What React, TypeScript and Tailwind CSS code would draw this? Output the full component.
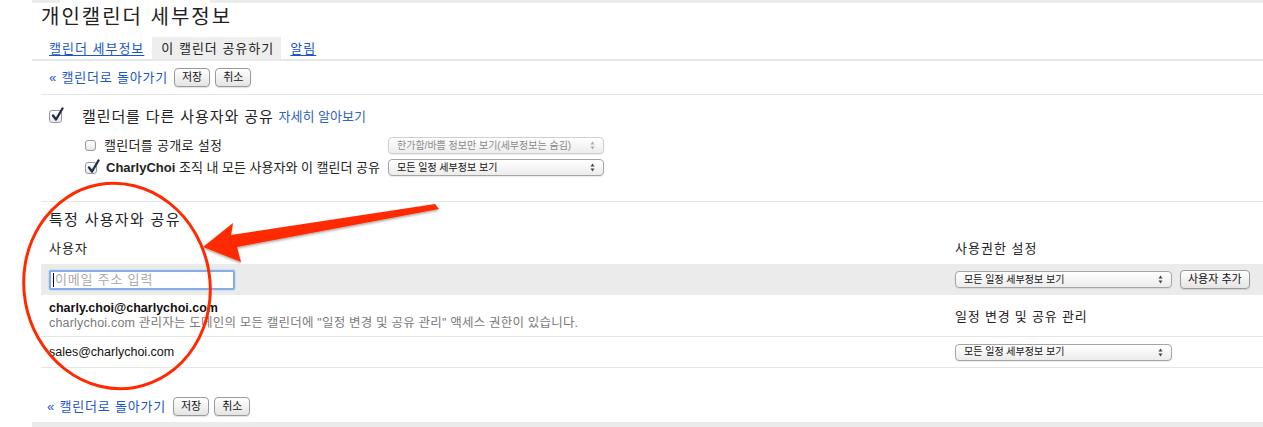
import React from "react";

const Arrows = ({ c = "#555" }: { c?: string }) => (
  <svg width="5" height="9" viewBox="0 0 5 9">
    <path d="M2.5 0.5 L4.5 3.5 L0.5 3.5 Z" fill={c} />
    <path d="M2.5 8.5 L4.5 5.5 L0.5 5.5 Z" fill={c} />
  </svg>
);

const Select = ({ className, text, disabled }: { className: string; text: string; disabled?: boolean }) => (
  <div
    className={
      "flex h-[17px] items-center justify-between rounded-[4px] border bg-gradient-to-b from-white to-[#ececec] pl-[8px] pr-[8px] text-[10px] leading-none shadow-[0_1px_1px_rgba(0,0,0,0.08)] " +
      (disabled ? "border-[#cfcfcf] text-[#8a8a8a]" : "border-[#a5a5a5] text-[#111]") +
      " " +
      className
    }
  >
    <span>{text}</span>
    <Arrows c={disabled ? "#aaa" : "#444"} />
  </div>
);

const Btn = ({ text }: { text: string }) => (
  <div className="flex h-[19px] items-center rounded-[4px] border border-[#9a9a9a] bg-gradient-to-b from-white to-[#e4e4e4] px-[7px] text-[11px] leading-none text-[#111] shadow-[0_1px_1px_rgba(0,0,0,0.12)]">
    {text}
  </div>
);

const Check = ({ checked, size }: { checked: boolean; size: string }) => (
  <div
    className={
      "relative flex items-center justify-center rounded-[3px] border border-[#9a9a9a] bg-gradient-to-b from-white to-[#e8e8e8] " +
      size
    }
  >
    {checked && (
      <svg className="absolute left-[1px] top-[-4px]" width="13" height="15" viewBox="0 0 13 15">
        <path d="M2 8.5 L5 12.5 L11.5 1.5" fill="none" stroke="#1f2d4a" strokeWidth="2.3" strokeLinecap="round" strokeLinejoin="round" />
      </svg>
    )}
  </div>
);

const BackRow = ({ gap }: { gap: string }) => (
  <div className={"flex items-center " + gap}>
    <a className="text-[13px] leading-none tracking-[0.8px] text-[#1a56c8]">« 캘린더로 돌아가기</a>
    <div className="flex gap-[5px]">
      <Btn text="저장" />
      <Btn text="취소" />
    </div>
  </div>
);

export default function App() {
  return (
    <div className="relative h-[427px] w-[1263px] overflow-hidden bg-white font-['Liberation_Sans','Noto_Sans_CJK_KR',sans-serif] text-[#222]">
      {/* top strip */}
      <div className="ml-[32px] flex h-[3px] bg-[#ececec]">
        <div className="ml-[28px] h-[3px] w-[150px] bg-white" />
      </div>
      {/* title */}
      <div className="ml-[41px] h-[34px] text-[20px] leading-[28px] tracking-[2px] text-[#222]">개인캘린더 세부정보</div>
      {/* tabs */}
      <div className="ml-[32px] flex h-[24px] border-b-2 border-[#e8e8e8] text-[13px] leading-none tracking-[1px]">
        <a className="ml-[17px] flex items-center text-[#1a56c8] underline underline-offset-2">캘린더 세부정보</a>
        <div className="ml-[8px] flex w-[129px] items-center bg-[#eeeeee] pl-[9px] text-[#222]">이 캘린더 공유하기</div>
        <a className="ml-[9px] flex items-center text-[#1a56c8] underline underline-offset-2">알림</a>
      </div>

      <div className="ml-[41px]">
        {/* back row */}
        <div className="flex h-[34px] items-center border-b border-[#e6e6e6] pl-[8px]">
          <BackRow gap="gap-[6px]" />
        </div>

        {/* share section */}
        <div className="h-[107px] border-b border-[#e6e6e6] pl-[8px] pt-[11px]">
          <div className="flex h-[20px] items-center">
            <Check checked size="h-[13px] w-[13px]" />
            <span className="ml-[20px] text-[15px] leading-none tracking-[0.9px] text-[#222]">캘린더를 다른 사용자와 공유</span>
            <a className="ml-[5px] text-[13px] leading-none text-[#2f62c2]">자세히 알아보기</a>
          </div>
          <div className="ml-[36px] mt-[10px] flex h-[19px] items-center">
            <Check checked={false} size="h-[11px] w-[11px]" />
            <span className="ml-[8px] w-[284px] text-[13px] leading-none tracking-[0.3px]">캘린더를 공개로 설정</span>
            <Select className="w-[216px]" text="한가함/바쁨 정보만 보기(세부정보는 숨김)" disabled />
          </div>
          <div className="ml-[36px] mt-[3px] flex h-[19px] items-center">
            <Check checked size="h-[12px] w-[12px]" />
            <span className="ml-[9px] w-[282px] text-[13px] leading-none">
              <b className="font-bold">CharlyChoi</b> 조직 내 모든 사용자와 이 캘린더 공유
            </span>
            <Select className="w-[216px]" text="모든 일정 세부정보 보기" />
          </div>
        </div>

        {/* specific users */}
        <div className="flex h-[25px] items-end pl-[8px] text-[15px] leading-none tracking-[1.3px]">특정 사용자와 공유</div>
        <div className="flex h-[37px] items-center pt-[6px] text-[13px] leading-none tracking-[1px]">
          <span className="w-[914px] pl-[8px]">사용자</span>
          <span>사용권한 설정</span>
        </div>
        <div className="flex h-[31px] items-center bg-[#ebebeb]">
          <div className="w-[914px] pl-[8px]">
            <div className="flex h-[20px] w-[186px] items-center rounded-[2px] border-2 border-[#86aee6] bg-white pl-[2px] text-[13px] leading-none tracking-[0.8px] text-[#aaa] shadow-[0_0_2px_#9fc0ee]">
              <span className="mr-[1px] h-[14px] w-[1px] bg-black" />
              이메일 주소 입력
            </div>
          </div>
          <Select className="w-[217px]" text="모든 일정 세부정보 보기" />
          <div className="ml-[8px]">
            <Btn text="사용자 추가" />
          </div>
        </div>
        <div className="flex h-[42px] items-center border-b border-[#e6e6e6]">
          <div className="w-[914px] pl-[8px] text-[12.5px]">
            <div className="font-bold leading-[15px] text-[#111]">charly.choi@charlychoi.com</div>
            <div className="leading-[15px] tracking-[0.2px] text-[#7a7a7a]">
              charlychoi.com 관리자는 도메인의 모든 캘린더에 "일정 변경 및 공유 관리" 액세스 권한이 있습니다.
            </div>
          </div>
          <span className="pt-[2px] text-[13px] leading-none tracking-[0.8px]">일정 변경 및 공유 관리</span>
        </div>
        <div className="flex h-[31px] items-center border-b border-[#e6e6e6]">
          <span className="w-[914px] pl-[8px] text-[12.5px] leading-none text-[#111]">sales@charlychoi.com</span>
          <Select className="w-[217px]" text="모든 일정 세부정보 보기" />
        </div>
        <div className="flex h-[54px] items-end pb-[6px] pl-[6px]">
          <BackRow gap="gap-[7px]" />
        </div>
      </div>
      <div className="ml-[32px] h-[6px] bg-[#ebebeb]" />

      {/* annotation overlay */}
      <svg className="pointer-events-none absolute left-0 top-0" width="1263" height="427" viewBox="0 0 1263 427">
        <defs>
          <filter id="sh" x="-10%" y="-10%" width="120%" height="130%">
            <feDropShadow dx="0" dy="1.5" stdDeviation="1.2" floodColor="#000" floodOpacity="0.35" />
          </filter>
        </defs>
        <ellipse cx="117" cy="286" rx="93" ry="103" transform="rotate(-10 117 286)" fill="none" stroke="#ff2a00" strokeWidth="3" />
        <polygon
          points="435,204 439,209 237,247 241,262 203,247 233,223 231,235"
          fill="#ff2a00"
          filter="url(#sh)"
        />
      </svg>
    </div>
  );
}
